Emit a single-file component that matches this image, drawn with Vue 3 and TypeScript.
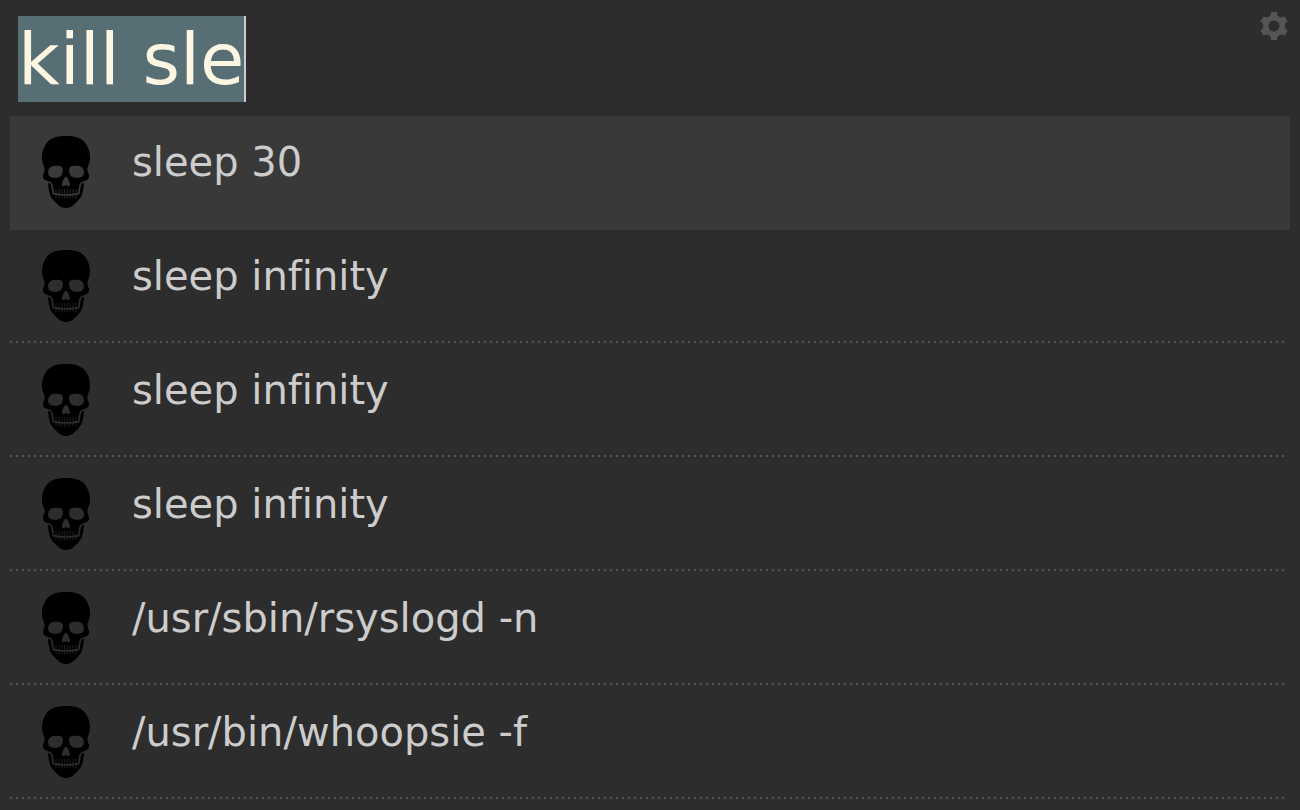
<script setup lang="ts">
import { ref } from 'vue'

interface Entry {
  id: number
  command: string
}

const query = ref<string>('kill sle')
const selected = ref<number>(0)
const entries: Entry[] = [
  { id: 0, command: 'sleep 30' },
  { id: 1, command: 'sleep infinity' },
  { id: 2, command: 'sleep infinity' },
  { id: 3, command: 'sleep infinity' },
  { id: 4, command: '/usr/sbin/rsyslogd -n' },
  { id: 5, command: '/usr/bin/whoopsie -f' },
]
const toothGaps: number[] = [78, 87, 96, 104, 112, 120, 129, 138]
const gearAngles: number[] = [0, 60, 120, 180, 240, 300]
</script>

<template>
  <main class="launcher">
    <header class="bar">
      <input v-model="query" class="query" type="text" aria-label="Query" spellcheck="false" autocomplete="off" />
      <button class="settings" type="button" aria-label="Preferences">
        <svg viewBox="-14 -14 28 28" aria-hidden="true">
          <circle class="ring" r="8" />
          <path v-for="a in gearAngles" :key="a" d="M-5.5 -8.5 L-3.4 -11 L-2.8 -14 H2.8 L3.4 -11 L5.5 -8.5Z" :transform="`rotate(${a})`" />
        </svg>
      </button>
    </header>
    <ul class="results">
      <li v-for="entry in entries" :key="entry.id">
        <button type="button" class="row" :class="{ active: entry.id === selected }" @click="selected = entry.id">
          <svg class="skull" viewBox="0 33 216 216" aria-hidden="true">
            <path
              class="bone"
              d="M108 33 C135 33 151 37 164 52 C177 67 181 88 180 104 C178 117 172 124 172 134 C173 143 178 146 177 155 C176 163 170 166 162 168 L162 174 C161 190 158 204 154 214 C148 225 138 233 130 241 C124 247 117 249 108 249 C99 249 92 247 86 241 C78 233 68 225 62 214 C58 204 55 190 54 174 L54 168 C46 166 40 163 39 155 C38 146 43 143 44 134 C44 124 38 117 36 104 C35 88 39 67 52 52 C65 37 81 33 108 33Z"
            />
            <path class="hole" d="M62 126 C72 121 90 122 96 126 C101 133 99 145 93 153 C86 160 65 161 57 152 C52 145 54 131 62 126Z" />
            <path class="hole" d="M154 126 C144 121 126 122 120 126 C115 133 117 145 123 153 C130 160 151 161 159 152 C164 145 162 131 154 126Z" />
            <path class="hole" d="M108 155 C113 155 121 173 120 181 C118 185 112 184 108 180 C104 184 98 185 96 181 C95 173 103 155 108 155Z" />
            <path class="gap" d="M48 171 C61 170 65 174 66 183 L70 206 Q108 214 146 206 L150 183 C151 174 155 170 168 171" />
            <path v-for="x in toothGaps" :key="x" class="tooth" :d="`M${x} 192 V220`" />
          </svg>
          <span class="command">{{ entry.command }}</span>
        </button>
      </li>
    </ul>
  </main>
</template>

<style>
html,
body {
  background: #2d2d2d;
}
</style>

<style scoped>
.launcher {
  box-sizing: border-box;
  min-height: 100vh;
  padding: 0 10px;
  background: #2d2d2d;
  color: #cccccc;
  font-family: "DejaVu Sans", sans-serif;
}

.bar {
  display: flex;
  justify-content: space-between;
  align-items: flex-start;
  padding: 16px 0 14px 8px;
}

.query {
  field-sizing: content;
  box-sizing: content-box;
  height: 86px;
  max-width: 90%;
  padding: 0;
  border: 0;
  border-right: 2px solid #cccccc;
  outline: 0;
  background: #586e75;
  color: #fdf6e3;
  font: 72px/86px "DejaVu Sans", sans-serif;
}

.settings {
  display: flex;
  margin: -4px 2px 0 0;
  padding: 0;
  border: 0;
  background: none;
}

.settings svg {
  width: 28px;
  height: 28px;
  fill: #555555;
}

.settings .ring {
  fill: none;
  stroke: #555555;
  stroke-width: 5;
}

.results {
  margin: 0;
  padding: 0;
  list-style: none;
}

.row {
  --surface: #2d2d2d;
  display: flex;
  align-items: flex-start;
  gap: 30px;
  box-sizing: border-box;
  width: 100%;
  min-height: 114px;
  padding: 20px;
  border: 0;
  background-color: var(--surface);
  background-image: repeating-linear-gradient(90deg, #555555 0 2px, transparent 2px 6px);
  background-repeat: no-repeat;
  background-position: left bottom 1px;
  background-size: calc(100% - 6px) 2px;
  color: inherit;
  font: inherit;
  text-align: left;
}

.row.active {
  --surface: #393939;
  background-image: none;
}

.skull {
  flex: none;
  width: 72px;
  height: 72px;
}

.bone {
  fill: #000000;
}

.hole {
  fill: var(--surface);
}

.gap {
  fill: none;
  stroke: var(--surface);
  stroke-width: 5;
}

.tooth {
  stroke: var(--surface);
  stroke-width: 2;
}

.command {
  padding-top: 2px;
  font-size: 40px;
  line-height: 48px;
  font-variant-ligatures: none;
}
</style>
